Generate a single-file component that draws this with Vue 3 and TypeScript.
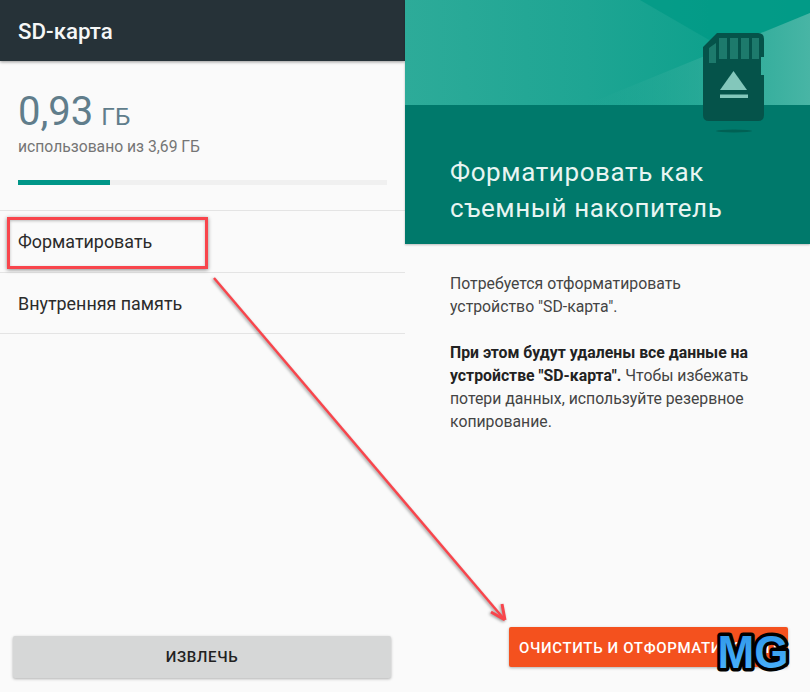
<template>
  <div class="page">
    <section class="panel left">
      <header class="appbar">SD-карта</header>
      <div class="usage">
        <div class="amount"><span class="num">{{ used }}</span><span class="unit">ГБ</span></div>
        <div class="of">использовано из {{ total }} ГБ</div>
        <div class="track"><div class="fill" :style="{ width: percent + '%' }"></div></div>
      </div>
      <ul class="menu">
        <li v-for="item in menu" :key="item">{{ item }}</li>
      </ul>
      <div class="left-foot">
        <button class="btn-eject">ИЗВЛЕЧЬ</button>
      </div>
    </section>

    <section class="panel right">
      <div class="hero">
        <div class="band">
          <svg class="band-art" width="405" height="105" viewBox="0 0 405 105" preserveAspectRatio="none">
            <defs>
              <linearGradient id="bandBase" x1="0" y1="0" x2="1" y2="0">
                <stop offset="0" stop-color="#2dab99" />
                <stop offset="0.45" stop-color="#1ea593" />
                <stop offset="0.75" stop-color="#0fa18d" />
                <stop offset="1" stop-color="#0a9e8a" />
              </linearGradient>
              <linearGradient id="bandWedge" x1="0" y1="0" x2="1" y2="0">
                <stop offset="0" stop-color="#2dab99" stop-opacity="0" />
                <stop offset="1" stop-color="#48b5a5" />
              </linearGradient>
            </defs>
            <rect width="405" height="105" fill="url(#bandBase)" />
            <polygon points="235,0 405,0 405,13 318,48" fill="#009a85" opacity=".75" />
            <polygon points="405,13 180,105 405,105" fill="url(#bandWedge)" />
          </svg>
        </div>
        <div class="hero-title">
          <h1>Форматировать как<br />съемный накопитель</h1>
        </div>
        <svg class="sdcard" width="61" height="100" viewBox="0 0 61 100">
          <path d="M14 0H55Q61 0 61 6V24H58V42H61V82Q61 88 55 88H6Q0 88 0 82V14Z" fill="#05534a" />
          <path d="M6 15L13 10V30H6Z M16 5H24V26H16Z M27 5H35V26H27Z M38 5H46V26H38Z M49 5H56V26H49Z" fill="#1d7a6c" />
          <path d="M30.500 38L44 57H17Z" fill="#83c7bb" />
          <rect x="17" y="61.500" width="28" height="3.500" fill="#83c7bb" />
          <ellipse cx="31" cy="98" rx="18" ry="1.500" fill="#00443a" opacity=".45" />
        </svg>
      </div>
      <div class="copy">
        <p>Потребуется отформатировать устройство "SD-карта".</p>
        <p><b>При этом будут удалены все данные на устройстве "SD-карта".</b> Чтобы избежать потери данных, используйте резервное копирование.</p>
      </div>
      <div class="right-foot">
        <button class="btn-format">ОЧИСТИТЬ И ОТФОРМАТИРОВАТЬ</button>
      </div>
    </section>

    <!-- annotation drawn over the screenshots -->
    <div class="mark"></div>
    <svg class="arrow" width="810" height="692" viewBox="0 0 810 692">
      <g fill="none" stroke="#f8454c" stroke-width="2.500" class="arrow-shape">
        <path d="M214 278L504 619" />
        <path d="M505 620L491 612M505 620L502 604" stroke-width="3" />
      </g>
    </svg>
    <svg class="logo" width="96" height="60" viewBox="0 0 96 60">
      <defs>
        <linearGradient id="logoBlue" x1="0" y1="0" x2="0" y2="1">
          <stop offset="0" stop-color="#2b93e6" />
          <stop offset="1" stop-color="#4fb6ff" />
        </linearGradient>
      </defs>
      <text x="48" y="46" text-anchor="middle" textLength="71" lengthAdjust="spacingAndGlyphs" class="logo-text" fill="url(#logoBlue)">MG</text>
    </svg>
  </div>
</template>

<script setup lang="ts">
const used = '0,93'
const total = '3,69'
const percent = 25
const menu = ['Форматировать', 'Внутренняя память']
</script>

<style>
html, body { margin: 0; background: #fafafa; }
</style>

<style scoped>
.page {
  position: relative;
  display: flex;
  width: 810px;
  height: 692px;
  overflow: hidden;
  background: #fafafa;
  font-family: Roboto, "Liberation Sans", sans-serif;
}
.panel {
  display: flex;
  flex-direction: column;
  width: 405px;
}

/* left screen */
.appbar {
  height: 61px;
  padding-left: 18px;
  box-sizing: border-box;
  line-height: 63px;
  font-size: 22.300px;
  font-weight: 500;
  color: #f5f7f7;
  background: #263238;
  box-shadow: 0 1px 3px rgba(0, 0, 0, .4);
}
.usage {
  padding: 27px 18px 0;
  height: 125px;
  box-sizing: border-box;
}
.amount {
  color: #607d8b;
  line-height: 48px;
  white-space: nowrap;
}
.num { font-size: 40px; }
.unit { margin-left: 8px; font-size: 24.500px; }
.of {
  margin-top: -8px;
  font-size: 15.700px;
  line-height: 22px;
  color: #757575;
}
.track {
  margin-top: 22px;
  height: 5px;
  background: #f0f0f0;
}
.fill {
  height: 100%;
  background: #009688;
}
.menu {
  margin: 24px 0 0;
  padding: 0;
  list-style: none;
  border-top: 1px solid #e4e4e4;
}
.menu li {
  height: 60.500px;
  padding-left: 18px;
  line-height: 62px;
  font-size: 17.900px;
  color: #2b2b2b;
  border-bottom: 1px solid #e4e4e4;
}
.left-foot {
  margin-top: auto;
  padding: 0 14px 14px 13px;
}
.btn-eject {
  display: block;
  width: 100%;
  height: 42px;
  border: 0;
  border-radius: 2px;
  background: #d6d7d7;
  box-shadow: 0 1px 3px rgba(0, 0, 0, .3);
  font: 500 15px Roboto, "Liberation Sans", sans-serif;
  letter-spacing: .65px;
  color: #222;
}

/* right screen */
.hero {
  position: relative;
  height: 244px;
  background: #00796b;
  box-shadow: 0 1px 2px rgba(0, 0, 0, .25);
}
.band { height: 105px; overflow: hidden; }
.band-art { display: block; }
.hero-title { padding: 49px 0 0 45px; }
h1 {
  margin: 0;
  font-size: 26px;
  font-weight: 400;
  line-height: 36px;
  letter-spacing: .6px;
  color: #e8f5f2;
}
.sdcard {
  position: absolute;
  left: 298px;
  top: 33px;
}
.copy {
  padding: 28px 55px 0 45px;
  font-size: 15.800px;
  line-height: 23px;
  color: #444;
}
.copy p { margin: 0 0 23px; }
.copy b { font-weight: 700; color: #222; }
.right-foot {
  margin-top: auto;
  padding: 0 22px 25px 104px;
}
.btn-format {
  display: block;
  width: 100%;
  height: 40px;
  padding: 2px 0 0 10px;
  border: 0;
  border-radius: 2px;
  background: #f4511e;
  box-shadow: 0 1px 3px rgba(0, 0, 0, .3);
  font: 500 15px Roboto, "Liberation Sans", sans-serif;
  letter-spacing: .65px;
  color: #fff;
  text-align: left;
  white-space: nowrap;
  overflow: hidden;
}

/* overlays */
.mark {
  position: absolute;
  left: 7px;
  top: 217px;
  width: 201px;
  height: 52px;
  box-sizing: border-box;
  border: 3px solid #f8454c;
  box-shadow: 0 1px 4px rgba(0, 0, 0, .45), inset 0 1px 3px rgba(0, 0, 0, .25);
}
.arrow {
  position: absolute;
  left: 0;
  top: 0;
  pointer-events: none;
}
.arrow-shape { filter: drop-shadow(-1px 1px 1.500px rgba(0, 0, 0, .4)); }
.logo {
  position: absolute;
  left: 705px;
  top: 622px;
}
.logo-text {
  font-family: "Liberation Sans", Arial, sans-serif;
  font-weight: 700;
  font-size: 46px;
  stroke: #000;
  stroke-width: 7px;
  stroke-linejoin: round;
  paint-order: stroke;
}
</style>
